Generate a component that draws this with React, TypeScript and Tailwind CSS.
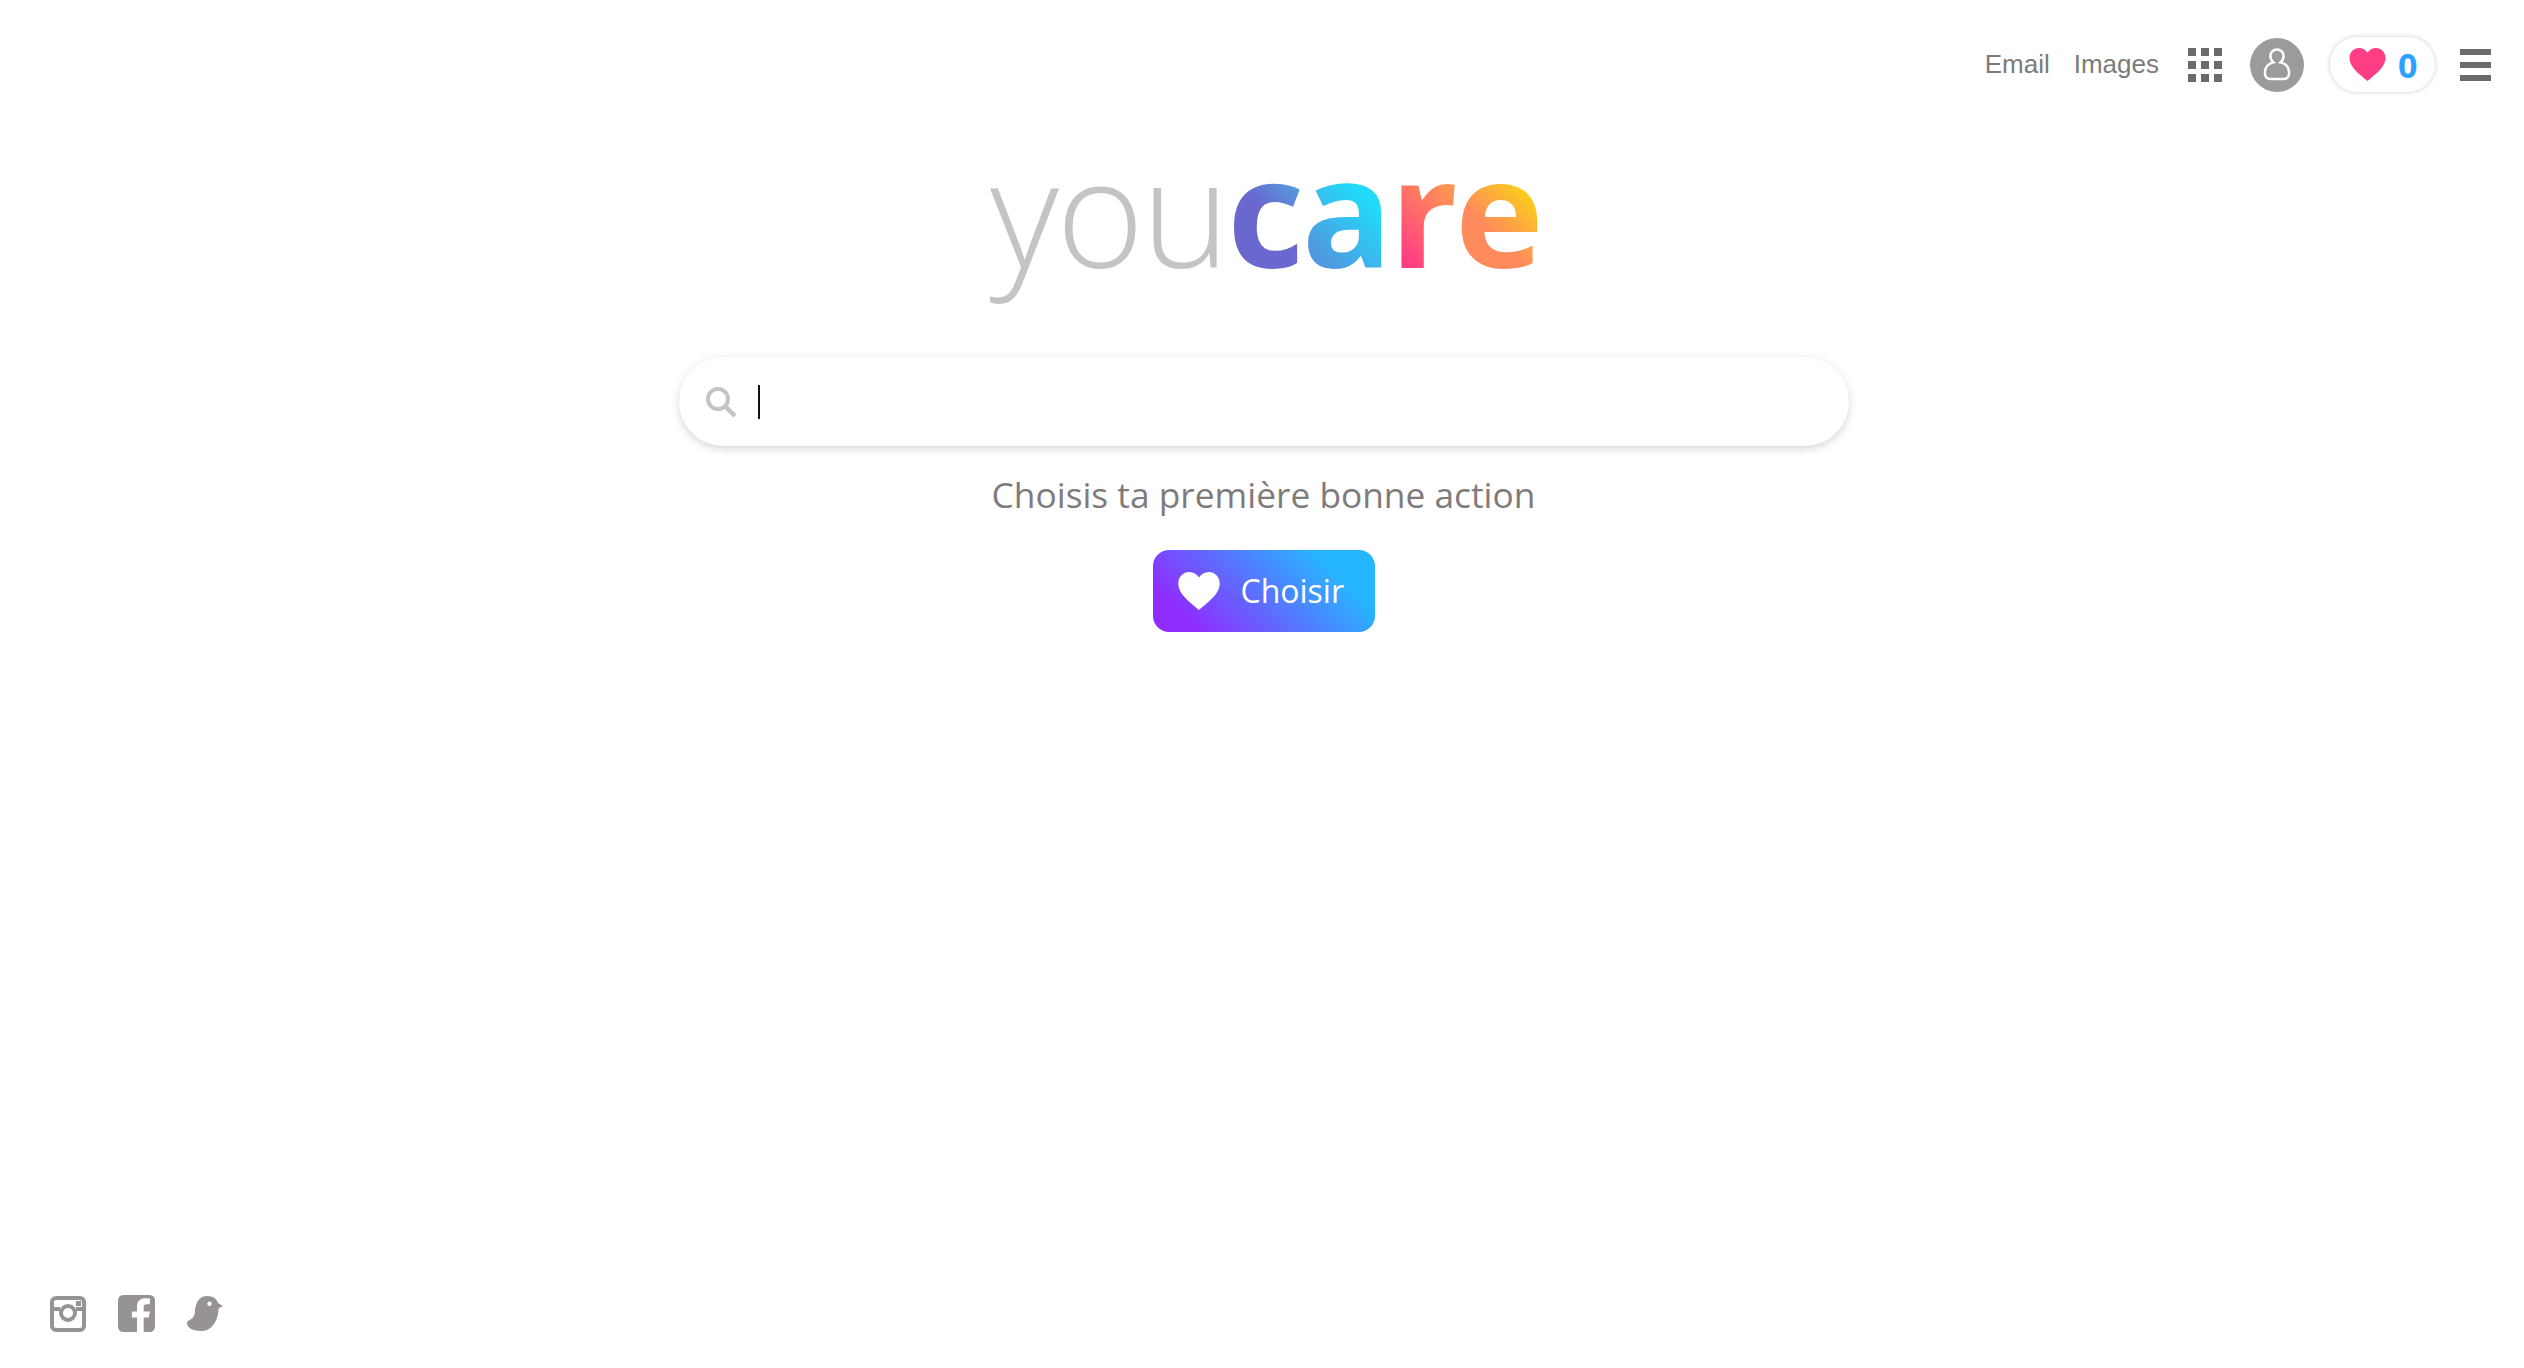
import React from "react";

const openSans = "font-['Open_Sans',sans-serif]";

function Heart({ className }: { className: string }) {
    return (
        <svg viewBox="0 0 24 22" className={className} fill="currentColor">
            <path d="M12 22C9 19 0 13.5 0 6.6 0 2.8 2.9 0 6.3 0 8.7 0 10.8 1.2 12 3.2 13.2 1.2 15.3 0 17.7 0 21.1 0 24 2.8 24 6.6 24 13.5 15 19 12 22Z" />
        </svg>
    );
}

function GridIcon() {
    return (
        <div className="grid grid-cols-3 gap-[5px] w-[34px]">
            {Array.from({ length: 9 }).map((_, i) => (
                <div key={i} className="w-[8px] h-[8px] bg-[#6b6b6b]" />
            ))}
        </div>
    );
}

function Header() {
    return (
        <header className="flex justify-end items-center h-[55px] mt-[37px] pr-[33px] font-['Liberation_Sans',sans-serif] text-[26px] text-[#7b7b7b]">
            <a className="mr-[24px]">Email</a>
            <a className="mr-[29px]">Images</a>
            <div className="mr-[28px]"><GridIcon /></div>

            {/* avatar */}
            <div className="flex items-center justify-center w-[54px] h-[54px] rounded-full bg-[#9b9b9b] mr-[26px]">
                <svg viewBox="0 0 28 34" className="w-[28px] h-[33px]" fill="none" stroke="#ffffff" strokeWidth="2.500">
                    <path d="M14 1.500c-4 0-6.800 3-6.800 6.800 0 2.800 1.300 5 3.200 6.500C5.500 16 1.500 19.500 1.500 25.500c0 4 2 6.500 6 6.500h13c4 0 6-2.500 6-6.500 0-6-4-9.500-8.900-10.700 1.900-1.500 3.200-3.700 3.200-6.500C20.800 4.500 18 1.500 14 1.500Z" />
                </svg>
            </div>

            {/* likes */}
            <div className="flex items-center w-[105px] h-[55px] rounded-full bg-white shadow-[0_0_5px_rgba(0,0,0,0.2)] pl-[19px] mr-[25px]">
                <Heart className="w-[37px] h-[33px] text-[#ff3d85]" />
                <span className={`${openSans} ml-[12px] text-[34px] font-bold text-[#2ea0ff] leading-none`}>0</span>
            </div>

            <div className="flex flex-col gap-[7px] w-[31px]">
                <div className="h-[6px] bg-[#6b6b6b]" />
                <div className="h-[6px] bg-[#6b6b6b]" />
                <div className="h-[6px] bg-[#6b6b6b]" />
            </div>
        </header>
    );
}

function Logo() {
    return (
        <h1 className={`${openSans} text-[150px] leading-[200px] tracking-[-2.700px] mt-[18px] ml-[4px] select-none`}>
            <span className="font-light text-[#c4c4c4]">you</span>
            <span className="font-bold">
                <span className="bg-[linear-gradient(45deg,#6a67ce_50%,#4fa8e4_75%)] bg-clip-text text-transparent">c</span>
                <span className="bg-[linear-gradient(45deg,#5098e0_25%,#22dafa_60%)] bg-clip-text text-transparent">a</span>
                <span className="bg-[linear-gradient(45deg,#ff3d85_25%,#ff9a4f_70%)] bg-clip-text text-transparent">r</span>
                <span className="bg-[linear-gradient(45deg,#ff8a5c_40%,#fbcb1e_65%)] bg-clip-text text-transparent">e</span>
            </span>
        </h1>
    );
}

function SearchBar() {
    return (
        <div className="flex items-center w-[1170px] h-[89px] mt-[47px] rounded-full bg-white pl-[26px] shadow-[0_3px_9px_rgba(60,80,80,0.22)]">
            <svg viewBox="0 0 32 32" className="w-[32px] h-[32px]" fill="none" stroke="#c4c4c4" strokeWidth="4">
                <circle cx="13" cy="13" r="10" />
                <path d="M20 20l10 10" strokeWidth="4.500" />
            </svg>
            <div className="w-[2px] h-[34px] bg-[#111111] ml-[21px]" />
        </div>
    );
}

function Footer() {
    return (
        <footer className="flex items-center gap-[32px] mt-auto mb-[36px] ml-[50px] text-[#979393]">
            <svg viewBox="0 0 36 36" className="w-[36px] h-[36px]" fill="none" stroke="currentColor" strokeWidth="4">
                <rect x="2" y="2" width="32" height="32" rx="4" />
                <path d="M2 13h8M26 13h8" />
                <circle cx="18" cy="17" r="7" />
                <rect x="26" y="5" width="5" height="5" fill="currentColor" stroke="none" />
            </svg>
            <svg viewBox="0 0 36 36" className="w-[37px] h-[37px]" fill="currentColor">
                <path d="M5 0h26a5 5 0 0 1 5 5v26a5 5 0 0 1-5 5h-6V22h5l1-6h-6v-4c0-2 .8-3 3-3h3V3.500c-1-.2-2.500-.3-4.500-.3-5 0-8 3-8 8V16h-5v6h5v14H5a5 5 0 0 1-5-5V5a5 5 0 0 1 5-5Z" />
            </svg>
            <svg viewBox="0 0 36 36" className="w-[36px] h-[36px]" fill="currentColor">
                <path fillRule="evenodd" d="M20 0C26 0 30 3 31 7L36 10 31.500 12.500C31.500 24 25 35 15 35 6 35 0 32 0 27 0 24 5 24 7 20 8.500 16 7.500 13 9 9 11 3 15 0 20 0ZM22.500 5.500a2.200 2.200 0 1 0 0 4.400 2.200 2.200 0 0 0 0-4.400Z" />
            </svg>
        </footer>
    );
}

export default function App() {
    return (
        <div className="flex flex-col h-screen bg-white overflow-hidden">
            <Header />

            <main className="flex flex-col items-center pl-[3px]">
                <Logo />
                <SearchBar />
                <p className={`${openSans} text-[35.300px] leading-[48px] text-[#7f7b7b] mt-[24px]`}>
                    Choisis ta première bonne action
                </p>

                <button className={`${openSans} flex items-center w-[222px] h-[82px] mt-[32px] rounded-[16px] pl-[25px] text-[32px] text-white bg-[linear-gradient(45deg,#8f2dff_15%,#26b6ff_80%)]`}>
                    <Heart className="w-[42px] h-[38px] text-white" />
                    <span className="ml-[21px]">Choisir</span>
                </button>
            </main>

            <Footer />
        </div>
    );
}
